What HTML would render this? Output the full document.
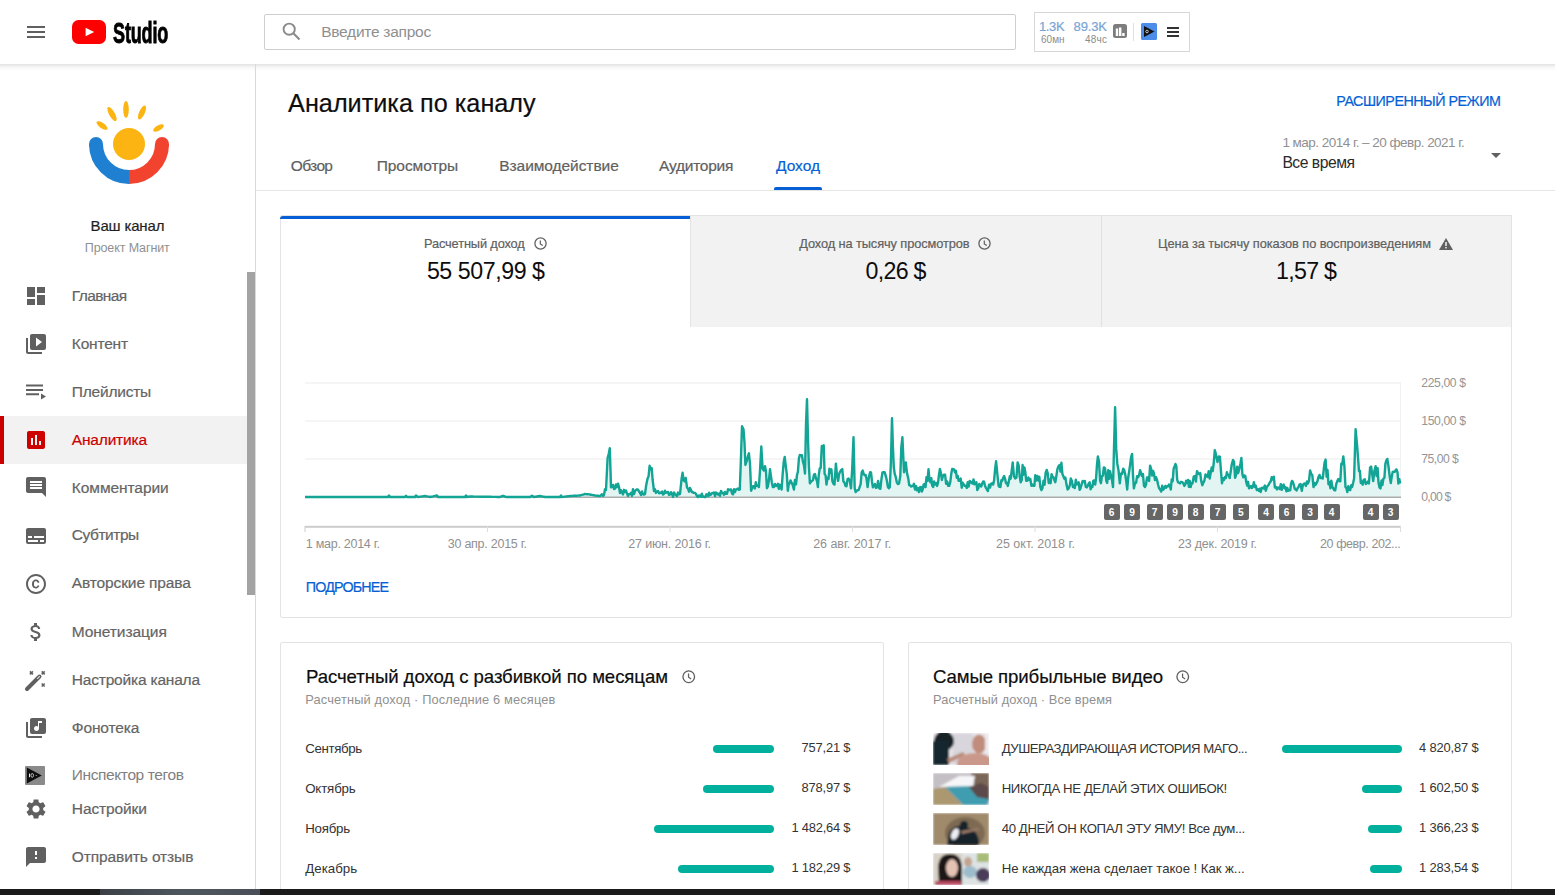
<!DOCTYPE html>
<html><head><meta charset="utf-8"><style>
*{margin:0;padding:0;box-sizing:border-box}
html,body{width:1555px;height:895px;overflow:hidden;background:#fff;font-family:"Liberation Sans",sans-serif}
.t{position:absolute;white-space:pre}
.ic{position:absolute;overflow:visible}
.box{position:absolute}
.mk{position:absolute;top:504px;width:16px;height:16px;background:#666;border-radius:2px;color:#fff;font-size:10.2px;line-height:17px;text-align:center;font-weight:700;font-family:"Liberation Sans",sans-serif}
.bar{position:absolute;height:8px;border-radius:4px;background:#00b09d}
.th{position:absolute;left:933px;width:56px;height:32px;overflow:hidden}
</style></head><body>
<!-- header -->
<div class="box" style="left:0;top:64px;width:1555px;height:7px;background:linear-gradient(rgba(0,0,0,.11),rgba(0,0,0,.03) 50%,rgba(0,0,0,0))"></div>
<div class="box" style="left:264px;top:14px;width:752px;height:36px;border:1px solid #cfcfcf;border-radius:2px"></div>
<div class="box" style="left:1034px;top:12px;width:156px;height:40px;border:1px solid #d8d8d8"></div>
<!-- sidebar -->
<div class="box" style="left:255px;top:64px;width:1px;height:831px;background:#d9d9d9"></div>
<div class="box" style="left:0;top:416px;width:247px;height:48px;background:#f2f2f2"></div>
<div class="box" style="left:0;top:416px;width:4px;height:48px;background:#cc0000"></div>
<div class="box" style="left:247px;top:272px;width:8px;height:323px;background:#a3a3a3"></div>
<!-- tabs border -->
<div class="box" style="left:256px;top:190px;width:1299px;height:1px;background:#e5e5e5"></div>
<div class="box" style="left:774px;top:187px;width:48px;height:3px;background:#065fd4;border-radius:2px 2px 0 0"></div>
<!-- metric card -->
<div class="box" style="left:280px;top:215px;width:1232px;height:403px;border:1px solid #e3e3e3;border-radius:2px"></div>
<div class="box" style="left:690px;top:215px;width:822px;height:112px;background:#f2f2f2;border:1px solid #e3e3e3;border-bottom:none"></div>
<div class="box" style="left:1101px;top:215px;width:1px;height:112px;background:#e0e0e0"></div>
<div class="box" style="left:280px;top:216px;width:410px;height:3px;background:#065fd4;border-radius:3px 0 0 0"></div>
<!-- chart -->
<svg class="ic" style="left:0;top:0;width:1555px;height:895px" viewBox="0 0 1555 895">
<rect x="305" y="382.5" width="1096" height="1" fill="#ececec"/>
<rect x="305" y="420.5" width="1096" height="1" fill="#ececec"/>
<rect x="305" y="458.5" width="1096" height="1" fill="#ececec"/>
<rect x="1400" y="382" width="1" height="115" fill="#f2f2f2"/>
<path d="M305.0,497.0 L305.9,497.0 L306.9,497.0 L307.8,497.0 L308.7,497.0 L309.6,497.0 L310.6,497.0 L311.5,497.0 L312.4,497.0 L313.3,497.0 L314.3,497.0 L315.2,497.0 L316.1,497.0 L317.0,497.0 L318.0,497.0 L318.9,497.0 L319.8,497.0 L320.7,497.0 L321.7,497.0 L322.6,497.0 L323.5,497.0 L324.4,497.0 L325.4,497.0 L326.3,497.0 L327.2,497.0 L328.1,497.0 L329.1,497.0 L330.0,497.0 L330.9,497.0 L331.8,497.0 L332.7,497.0 L333.6,497.0 L334.5,497.0 L335.5,497.0 L336.4,497.0 L337.3,497.0 L338.2,497.0 L339.1,497.0 L340.0,497.0 L340.9,497.0 L341.8,497.0 L342.7,497.0 L343.6,497.0 L344.5,497.0 L345.5,497.0 L346.4,497.0 L347.3,497.0 L348.2,497.0 L349.1,497.0 L350.0,497.0 L350.9,497.0 L351.8,497.0 L352.7,497.0 L353.6,497.0 L354.5,497.0 L355.5,497.0 L356.4,497.0 L357.3,497.0 L358.2,497.0 L359.1,497.0 L360.0,497.0 L360.9,497.0 L361.8,497.0 L362.7,497.0 L363.6,497.0 L364.5,497.0 L365.4,497.0 L366.3,497.0 L367.2,497.0 L368.1,497.0 L369.0,497.0 L369.9,497.0 L370.8,497.0 L371.7,497.0 L372.6,497.0 L373.5,497.0 L374.5,497.0 L375.4,497.0 L376.3,497.0 L377.2,497.0 L378.1,497.0 L379.0,497.0 L379.9,497.0 L380.8,497.0 L381.7,497.0 L382.6,497.0 L383.5,497.0 L384.4,497.0 L385.3,497.0 L386.2,497.0 L387.1,497.0 L388.0,497.0 L389.0,495.5 L390.0,497.0 L390.9,497.0 L391.9,497.0 L392.8,497.0 L393.8,497.0 L394.7,497.0 L395.6,497.0 L396.6,497.0 L397.5,497.0 L398.4,497.0 L399.4,497.0 L400.3,497.0 L401.2,497.0 L402.2,497.0 L403.1,497.0 L404.1,497.0 L405.0,497.0 L406.0,495.8 L407.0,497.0 L408.0,497.0 L409.0,497.0 L410.0,497.0 L411.0,497.0 L412.0,497.0 L413.0,497.0 L414.0,497.0 L415.0,497.0 L416.0,495.5 L417.0,496.2 L418.0,497.0 L419.0,496.9 L420.0,496.7 L421.0,496.6 L422.0,496.4 L423.0,496.3 L424.0,496.1 L425.0,496.0 L426.0,496.2 L427.0,496.4 L428.0,496.6 L429.0,496.8 L430.0,497.0 L431.0,496.8 L432.0,496.6 L433.0,496.4 L434.0,496.1 L435.0,495.9 L436.0,495.7 L437.0,495.5 L438.0,497.0 L438.9,497.0 L439.8,497.0 L440.7,497.0 L441.6,497.0 L442.5,497.0 L443.4,497.0 L444.3,497.0 L445.2,497.0 L446.1,497.0 L447.0,497.0 L447.9,497.0 L448.8,497.0 L449.7,497.0 L450.6,497.0 L451.5,497.0 L452.4,497.0 L453.3,497.0 L454.2,497.0 L455.1,497.0 L456.0,497.0 L456.9,497.0 L457.8,497.0 L458.7,497.0 L459.6,497.0 L460.5,497.0 L461.4,497.0 L462.3,497.0 L463.2,497.0 L464.1,497.0 L465.0,497.0 L466.0,495.5 L467.0,497.0 L468.0,496.8 L469.0,496.7 L470.0,496.5 L470.9,496.5 L471.8,496.5 L472.7,496.5 L473.6,496.6 L474.5,496.6 L475.5,496.6 L476.4,496.6 L477.3,496.6 L478.2,496.6 L479.1,496.7 L480.0,496.7 L480.9,496.7 L481.8,496.7 L482.7,496.7 L483.6,496.7 L484.5,496.7 L485.5,496.8 L486.4,496.8 L487.3,496.8 L488.2,496.8 L489.1,496.8 L490.0,496.8 L490.9,496.8 L491.8,496.9 L492.7,496.9 L493.6,496.9 L494.5,496.9 L495.5,496.9 L496.4,496.9 L497.3,497.0 L498.2,497.0 L499.1,497.0 L500.0,497.0 L501.0,496.6 L502.0,496.2 L503.0,495.8 L504.0,496.2 L505.0,496.6 L506.0,497.0 L506.9,497.0 L507.8,497.0 L508.8,497.0 L509.7,497.0 L510.6,497.0 L511.5,497.0 L512.5,497.0 L513.4,497.0 L514.3,497.0 L515.2,497.0 L516.2,497.0 L517.1,497.0 L518.0,497.0 L518.9,497.0 L519.8,497.0 L520.8,497.0 L521.7,497.0 L522.6,497.0 L523.5,497.0 L524.5,497.0 L525.4,497.0 L526.3,497.0 L527.2,497.0 L528.2,497.0 L529.1,497.0 L530.0,497.0 L531.0,496.4 L532.0,495.7 L533.0,496.4 L534.0,497.0 L535.0,496.8 L536.0,496.7 L537.0,496.5 L538.0,496.3 L539.0,496.2 L540.0,496.0 L541.0,496.2 L542.0,496.4 L543.0,496.6 L544.0,496.8 L545.0,497.0 L545.9,497.0 L546.9,497.0 L547.8,497.0 L548.8,497.0 L549.7,497.0 L550.6,497.0 L551.6,497.0 L552.5,497.0 L553.4,497.0 L554.4,497.0 L555.3,497.0 L556.2,497.0 L557.2,497.0 L558.1,497.0 L559.1,497.0 L560.0,497.0 L561.0,495.5 L562.0,497.0 L563.0,496.9 L564.0,496.8 L565.0,496.6 L566.0,496.5 L567.0,496.4 L568.0,496.2 L569.0,496.1 L570.0,496.0 L570.9,496.0 L571.8,495.9 L572.7,495.9 L573.6,495.8 L574.5,495.8 L575.5,495.7 L576.4,495.7 L577.3,495.6 L578.2,495.6 L579.1,495.5 L580.0,495.5 L581.0,495.2 L582.0,494.9 L583.0,494.6 L584.0,494.3 L585.0,494.0 L586.0,494.1 L587.0,494.2 L588.0,494.3 L589.0,494.4 L590.0,494.5 L591.0,494.7 L592.0,494.9 L593.0,495.1 L594.0,495.3 L595.0,495.5 L596.0,495.6 L597.0,495.7 L598.0,495.8 L599.0,495.9 L600.0,496.0 L601.0,495.1 L602.0,494.3 L603.0,496.0 L604.0,494.9 L605.0,489.2 L606.0,490.0 L607.6,458.0 L608.7,454.0 L609.8,448.2 L611.0,487.4 L612.0,486.8 L613.0,484.9 L614.0,489.0 L615.0,488.7 L616.0,484.4 L617.0,487.2 L618.0,483.7 L619.0,487.0 L620.0,493.0 L621.0,490.2 L622.0,492.1 L623.0,494.5 L624.0,489.8 L625.0,492.0 L626.0,490.6 L627.0,493.6 L628.0,495.9 L629.0,494.1 L630.0,494.0 L631.0,492.8 L632.0,495.8 L633.0,489.2 L634.0,494.0 L635.0,491.0 L636.0,490.0 L637.0,489.4 L638.0,489.7 L639.0,491.4 L640.0,493.0 L641.0,495.1 L642.0,491.5 L643.0,494.1 L644.0,494.6 L645.0,494.0 L646.2,485.2 L647.5,478.7 L648.6,476.2 L649.6,465.8 L650.7,469.3 L651.7,468.1 L652.6,479.5 L654.0,491.0 L655.0,489.3 L656.0,492.9 L657.0,491.5 L658.0,491.1 L659.0,493.2 L660.0,493.0 L661.0,492.6 L662.0,491.5 L663.0,494.5 L664.0,493.8 L665.0,490.7 L666.0,492.7 L667.0,492.3 L668.0,492.0 L669.0,494.9 L670.0,494.4 L671.0,492.2 L672.0,494.0 L673.0,496.9 L674.0,492.4 L675.0,494.3 L676.0,495.0 L677.0,496.1 L678.0,492.6 L679.0,494.2 L680.0,494.0 L681.6,478.7 L682.6,472.8 L683.7,480.5 L684.7,481.5 L685.7,478.0 L687.0,487.4 L688.0,488.7 L689.0,491.7 L690.0,487.9 L691.0,490.0 L692.0,492.2 L693.0,492.2 L694.0,492.9 L695.0,492.9 L696.0,494.0 L697.0,496.4 L698.0,497.0 L699.0,495.4 L700.0,496.0 L700.9,496.7 L701.8,493.7 L702.7,496.7 L703.6,496.4 L704.5,497.0 L705.5,497.0 L706.4,494.3 L707.3,494.7 L708.2,496.1 L709.1,492.6 L710.0,495.0 L711.0,494.7 L712.0,493.1 L713.0,492.8 L714.0,492.4 L715.0,496.1 L716.0,492.6 L717.0,493.2 L718.0,494.5 L719.0,493.5 L720.0,495.9 L721.0,490.9 L722.0,492.8 L723.0,493.0 L724.0,494.8 L725.0,492.0 L726.0,493.8 L727.0,493.7 L728.0,489.2 L729.0,489.8 L730.0,490.0 L731.0,489.4 L732.0,493.5 L733.0,494.4 L734.0,489.2 L735.0,492.0 L736.0,489.3 L736.9,489.1 L737.9,488.6 L738.8,489.9 L739.8,489.5 L740.9,459.8 L742.0,426.3 L743.5,429.3 L744.5,442.8 L745.4,465.0 L746.6,461.3 L747.7,457.4 L748.9,453.3 L750.0,463.7 L751.1,490.8 L752.0,488.4 L753.0,486.2 L753.9,486.3 L754.9,488.5 L755.8,482.2 L756.8,485.8 L757.9,485.6 L758.9,487.1 L760.1,468.9 L761.3,446.5 L762.6,468.6 L763.8,470.5 L765.0,466.2 L766.0,471.4 L766.9,488.3 L767.9,486.4 L769.0,479.5 L770.0,469.3 L771.8,482.2 L772.8,487.1 L773.9,487.1 L775.0,484.0 L776.0,486.0 L776.9,485.7 L777.9,483.7 L778.8,488.9 L779.7,484.7 L780.7,485.5 L781.6,489.5 L782.6,475.0 L783.7,462.0 L784.7,457.0 L785.7,465.5 L786.8,474.1 L787.8,490.8 L788.7,484.6 L789.6,483.4 L790.5,480.4 L791.4,482.2 L792.6,484.6 L793.9,489.5 L794.9,480.0 L796.0,484.3 L797.0,475.0 L797.9,471.9 L798.9,458.6 L799.8,455.0 L800.7,455.1 L801.9,455.3 L803.0,462.0 L804.0,465.5 L805.0,473.6 L806.0,424.7 L807.0,399.2 L808.0,439.5 L808.9,466.5 L809.9,483.4 L810.9,481.9 L812.0,480.9 L813.0,480.0 L814.0,474.5 L815.0,474.1 L816.0,478.5 L817.0,481.1 L817.9,487.1 L818.8,474.8 L819.7,468.6 L820.7,467.9 L821.8,446.0 L822.8,446.5 L823.7,445.3 L824.6,473.8 L825.6,475.5 L826.5,484.6 L827.5,477.6 L828.5,479.0 L829.4,468.8 L830.4,472.8 L831.4,469.3 L832.4,481.3 L833.5,483.9 L834.5,484.6 L835.9,463.7 L837.0,475.3 L838.1,480.9 L839.1,474.1 L840.2,471.6 L841.2,469.9 L842.3,469.1 L843.4,481.4 L844.4,482.3 L845.5,485.9 L846.5,486.3 L847.6,479.0 L848.6,478.5 L849.8,480.5 L851.0,488.3 L852.2,468.9 L853.5,437.3 L854.7,488.3 L855.7,492.1 L856.7,490.8 L857.6,490.2 L858.6,490.1 L859.6,487.1 L860.6,484.3 L861.7,472.3 L862.7,470.5 L863.7,474.1 L864.7,475.2 L865.6,475.0 L866.6,479.0 L867.6,487.1 L868.9,477.1 L870.1,472.3 L871.0,472.4 L872.0,481.5 L872.9,487.4 L873.8,485.9 L874.9,484.1 L876.0,487.9 L877.0,487.5 L878.1,480.9 L879.3,488.3 L880.4,488.8 L881.5,478.7 L882.5,472.5 L883.6,472.3 L884.7,472.3 L885.8,476.1 L886.8,480.3 L887.9,487.1 L888.8,488.2 L889.8,487.1 L890.9,462.3 L892.0,418.3 L892.9,446.5 L893.8,467.1 L894.7,473.6 L895.7,476.8 L896.8,482.3 L897.8,484.0 L899.0,483.6 L900.3,476.0 L901.3,447.5 L902.4,437.3 L904.0,472.3 L905.8,462.5 L907.0,473.1 L908.3,478.5 L909.2,485.2 L910.1,485.3 L911.1,486.6 L912.0,485.9 L913.0,486.1 L914.0,483.8 L915.0,489.6 L916.1,486.1 L917.1,490.4 L918.1,488.3 L919.0,492.1 L920.0,487.1 L920.9,487.0 L921.8,491.5 L922.7,489.5 L923.6,484.6 L924.6,484.0 L925.5,487.1 L926.5,477.2 L927.5,480.9 L928.5,469.3 L929.5,480.0 L930.4,482.2 L931.3,478.1 L932.2,485.5 L933.2,487.0 L934.1,481.5 L935.1,484.6 L936.1,482.9 L937.1,485.9 L938.0,483.0 L939.0,474.6 L939.9,469.0 L940.8,472.3 L941.9,480.0 L943.0,475.8 L944.0,474.6 L945.1,474.8 L946.1,483.9 L947.2,481.5 L948.2,485.9 L949.2,485.9 L950.3,481.9 L951.3,473.6 L952.2,469.0 L953.1,469.2 L954.1,469.5 L955.0,472.3 L955.9,470.7 L956.8,477.8 L957.7,475.8 L958.6,480.9 L959.6,480.8 L960.7,478.6 L961.7,487.7 L962.7,482.8 L963.8,484.7 L964.8,485.9 L965.8,485.7 L966.8,488.0 L967.7,482.1 L968.7,486.5 L969.7,480.9 L970.7,481.7 L971.6,482.9 L972.6,483.6 L973.5,479.4 L974.5,484.4 L975.4,482.9 L976.4,482.2 L977.3,490.0 L978.3,488.3 L979.3,484.0 L980.3,485.3 L981.2,486.5 L982.2,483.5 L983.2,481.5 L984.1,481.7 L985.0,485.7 L986.0,488.0 L986.9,489.5 L987.9,491.0 L989.0,484.6 L990.0,487.6 L991.0,483.9 L992.1,483.3 L993.1,484.6 L994.1,480.4 L995.1,469.2 L996.1,461.3 L997.4,474.5 L998.6,485.9 L999.5,486.9 L1000.4,487.0 L1001.4,480.3 L1002.3,480.7 L1003.2,477.7 L1004.1,476.0 L1005.0,478.6 L1006.0,483.2 L1006.9,482.9 L1007.8,485.9 L1008.8,481.6 L1009.8,476.2 L1010.7,478.7 L1011.7,470.7 L1012.7,462.5 L1014.0,476.5 L1015.2,478.5 L1016.4,477.6 L1017.6,462.5 L1018.6,465.1 L1019.7,476.5 L1020.7,482.2 L1021.7,480.1 L1022.6,465.0 L1023.5,474.7 L1024.4,467.5 L1025.3,471.9 L1026.2,480.9 L1027.2,480.9 L1028.3,477.5 L1029.3,480.0 L1030.3,478.9 L1031.4,485.7 L1032.4,484.6 L1033.4,485.9 L1034.4,485.7 L1035.3,475.2 L1036.3,480.5 L1037.3,476.0 L1038.3,480.5 L1039.3,476.8 L1040.4,487.4 L1041.4,490.2 L1042.4,488.3 L1043.5,480.8 L1044.6,484.7 L1045.6,473.0 L1046.7,469.9 L1047.7,473.0 L1048.7,483.0 L1049.7,479.7 L1050.6,483.2 L1051.6,474.2 L1052.5,476.9 L1053.4,477.2 L1054.3,479.9 L1055.3,482.2 L1056.4,475.8 L1057.4,469.1 L1058.5,466.3 L1059.6,465.0 L1060.5,471.6 L1061.4,462.8 L1062.4,474.1 L1063.3,476.0 L1064.4,478.7 L1065.4,477.6 L1066.5,484.6 L1067.6,489.5 L1068.7,488.4 L1069.8,485.3 L1070.8,478.5 L1071.9,480.9 L1072.9,487.1 L1073.9,485.5 L1074.8,488.1 L1075.8,479.8 L1076.8,484.6 L1077.7,483.3 L1078.7,482.3 L1079.6,489.8 L1080.5,488.3 L1081.6,484.4 L1082.7,480.9 L1083.7,481.9 L1084.8,480.9 L1085.8,487.0 L1086.8,487.4 L1087.8,485.9 L1088.7,483.5 L1089.7,482.3 L1090.6,489.4 L1091.5,485.9 L1092.4,487.0 L1093.3,480.9 L1094.3,480.4 L1095.2,484.6 L1096.1,477.8 L1097.0,464.4 L1097.9,456.4 L1099.0,461.4 L1100.1,480.9 L1101.0,483.2 L1101.9,476.1 L1102.9,475.6 L1103.8,467.4 L1105.0,468.1 L1106.3,480.9 L1107.2,482.9 L1108.2,470.1 L1109.1,478.9 L1110.0,471.1 L1111.0,475.8 L1112.0,480.0 L1113.0,487.1 L1114.0,448.5 L1115.1,407.2 L1116.2,448.9 L1117.3,463.7 L1118.5,470.1 L1119.8,483.4 L1120.9,473.8 L1122.1,473.9 L1123.2,468.6 L1124.2,470.0 L1125.2,474.2 L1126.2,480.9 L1127.2,489.5 L1128.2,477.5 L1129.2,471.1 L1130.1,464.9 L1131.1,457.1 L1132.1,453.9 L1133.0,475.2 L1133.9,488.3 L1135.0,483.5 L1136.1,482.8 L1137.1,476.1 L1138.2,477.2 L1139.1,474.9 L1140.1,470.2 L1141.0,472.9 L1141.9,476.0 L1142.9,473.9 L1144.0,485.8 L1145.0,487.1 L1146.0,484.5 L1147.0,477.4 L1148.0,477.5 L1149.1,480.9 L1150.1,465.6 L1151.1,468.6 L1152.1,475.5 L1153.1,471.0 L1154.0,473.7 L1155.0,480.1 L1156.0,477.2 L1157.0,479.7 L1158.1,484.7 L1159.1,488.3 L1160.1,489.5 L1161.2,491.6 L1162.2,485.7 L1163.2,489.7 L1164.3,488.2 L1165.3,485.9 L1166.2,487.7 L1167.1,486.3 L1168.0,486.4 L1169.0,484.6 L1169.9,486.0 L1170.8,489.5 L1171.7,479.4 L1172.7,481.2 L1173.6,468.8 L1174.5,466.8 L1175.4,464.0 L1176.3,466.0 L1177.2,479.9 L1178.2,482.6 L1179.1,482.6 L1180.0,483.4 L1181.1,481.8 L1182.2,482.1 L1183.2,483.3 L1184.3,485.9 L1185.2,484.7 L1186.1,480.8 L1187.0,482.8 L1188.0,480.0 L1188.9,486.9 L1189.8,480.9 L1190.7,487.0 L1191.6,483.1 L1192.5,483.4 L1193.7,476.6 L1194.9,476.0 L1195.9,481.6 L1197.0,471.2 L1198.0,473.0 L1199.1,474.1 L1200.2,473.0 L1201.2,480.9 L1202.3,485.2 L1203.4,482.6 L1204.4,480.6 L1205.5,474.5 L1206.6,476.0 L1207.6,476.9 L1208.7,471.3 L1209.7,478.5 L1210.7,472.8 L1211.7,467.5 L1212.7,471.1 L1213.7,463.5 L1214.8,450.1 L1215.8,453.9 L1217.5,462.0 L1218.9,456.4 L1219.9,456.7 L1221.0,471.6 L1222.0,483.4 L1223.0,478.1 L1224.0,480.0 L1224.9,477.1 L1225.9,478.1 L1226.9,472.3 L1227.8,474.7 L1228.8,475.6 L1229.7,478.1 L1230.6,472.3 L1231.8,464.2 L1233.0,460.0 L1234.0,461.7 L1235.1,477.8 L1236.1,474.8 L1237.2,466.6 L1238.2,473.0 L1239.3,469.0 L1240.4,463.7 L1241.4,458.0 L1242.4,474.3 L1243.3,477.3 L1244.3,475.4 L1245.3,476.0 L1246.2,481.9 L1247.2,485.6 L1248.1,481.8 L1249.0,488.3 L1250.0,487.3 L1251.0,485.9 L1251.9,487.9 L1252.9,486.6 L1253.9,482.2 L1254.9,487.0 L1255.8,485.8 L1256.8,490.0 L1257.8,489.3 L1258.8,490.7 L1259.7,488.7 L1260.7,492.0 L1261.7,487.9 L1262.7,487.7 L1263.8,488.5 L1264.8,485.6 L1265.8,490.7 L1266.8,487.1 L1267.8,485.7 L1268.8,484.5 L1269.7,482.6 L1270.7,481.4 L1271.7,477.2 L1272.8,479.5 L1273.8,476.7 L1274.9,487.6 L1276.0,487.1 L1277.0,489.4 L1277.9,487.4 L1278.9,487.8 L1279.8,489.0 L1280.8,484.1 L1281.7,489.9 L1282.7,486.0 L1283.6,484.6 L1284.6,488.3 L1285.5,487.1 L1286.4,491.3 L1287.4,488.0 L1288.3,490.8 L1289.2,490.3 L1290.2,490.3 L1291.1,483.3 L1292.0,480.9 L1292.9,481.8 L1293.8,485.0 L1294.8,488.9 L1295.7,489.5 L1296.6,490.5 L1297.6,488.1 L1298.5,487.2 L1299.4,484.6 L1300.6,484.1 L1301.8,490.8 L1302.8,485.4 L1303.9,483.6 L1304.9,483.4 L1305.9,485.9 L1307.0,481.4 L1308.0,483.4 L1309.0,480.9 L1310.1,470.4 L1311.1,473.6 L1312.3,475.2 L1313.5,487.1 L1314.5,482.9 L1315.5,485.0 L1316.4,483.4 L1317.4,481.4 L1318.4,477.3 L1319.5,474.9 L1320.6,478.1 L1321.6,477.8 L1322.7,478.5 L1323.7,470.0 L1324.6,462.5 L1325.6,459.6 L1326.6,476.7 L1327.5,470.0 L1328.5,484.3 L1329.5,482.2 L1330.4,488.2 L1331.3,480.7 L1332.3,486.5 L1333.2,488.4 L1334.2,490.0 L1335.2,490.3 L1336.2,484.2 L1337.3,481.1 L1338.3,479.1 L1339.3,481.0 L1340.3,481.2 L1341.3,463.8 L1342.3,464.1 L1343.3,456.4 L1344.4,466.2 L1345.5,487.1 L1346.4,487.9 L1347.3,492.1 L1348.3,486.1 L1349.2,489.6 L1350.2,490.1 L1351.2,485.2 L1352.1,487.0 L1353.1,483.1 L1354.1,478.5 L1355.6,429.3 L1357.2,446.6 L1359.0,471.2 L1359.9,470.7 L1360.8,483.0 L1361.8,481.2 L1362.7,484.7 L1363.7,479.8 L1364.8,479.3 L1365.8,484.0 L1366.8,483.3 L1367.9,481.6 L1368.9,483.4 L1370.1,467.5 L1371.1,466.5 L1372.2,474.4 L1373.2,481.0 L1374.4,470.9 L1375.6,466.2 L1376.6,476.1 L1377.6,468.1 L1378.5,482.6 L1379.5,487.4 L1380.5,488.4 L1381.5,480.4 L1382.4,485.0 L1383.4,478.7 L1384.4,477.8 L1385.4,463.7 L1386.3,460.6 L1387.3,458.9 L1388.5,466.3 L1389.8,477.3 L1390.8,483.0 L1391.8,476.4 L1392.7,472.0 L1393.7,471.8 L1394.7,471.8 L1395.6,470.4 L1396.5,469.4 L1397.5,472.4 L1398.4,483.6 L1399.3,479.1 L1400.2,483.4 L1400.2,497 L305,497 Z" fill="#e3f5f3"/>
<rect x="305" y="496.6" width="1096" height="1.2" fill="#9a9a9a"/>
<path d="M305.0,497.0 L305.9,497.0 L306.9,497.0 L307.8,497.0 L308.7,497.0 L309.6,497.0 L310.6,497.0 L311.5,497.0 L312.4,497.0 L313.3,497.0 L314.3,497.0 L315.2,497.0 L316.1,497.0 L317.0,497.0 L318.0,497.0 L318.9,497.0 L319.8,497.0 L320.7,497.0 L321.7,497.0 L322.6,497.0 L323.5,497.0 L324.4,497.0 L325.4,497.0 L326.3,497.0 L327.2,497.0 L328.1,497.0 L329.1,497.0 L330.0,497.0 L330.9,497.0 L331.8,497.0 L332.7,497.0 L333.6,497.0 L334.5,497.0 L335.5,497.0 L336.4,497.0 L337.3,497.0 L338.2,497.0 L339.1,497.0 L340.0,497.0 L340.9,497.0 L341.8,497.0 L342.7,497.0 L343.6,497.0 L344.5,497.0 L345.5,497.0 L346.4,497.0 L347.3,497.0 L348.2,497.0 L349.1,497.0 L350.0,497.0 L350.9,497.0 L351.8,497.0 L352.7,497.0 L353.6,497.0 L354.5,497.0 L355.5,497.0 L356.4,497.0 L357.3,497.0 L358.2,497.0 L359.1,497.0 L360.0,497.0 L360.9,497.0 L361.8,497.0 L362.7,497.0 L363.6,497.0 L364.5,497.0 L365.4,497.0 L366.3,497.0 L367.2,497.0 L368.1,497.0 L369.0,497.0 L369.9,497.0 L370.8,497.0 L371.7,497.0 L372.6,497.0 L373.5,497.0 L374.5,497.0 L375.4,497.0 L376.3,497.0 L377.2,497.0 L378.1,497.0 L379.0,497.0 L379.9,497.0 L380.8,497.0 L381.7,497.0 L382.6,497.0 L383.5,497.0 L384.4,497.0 L385.3,497.0 L386.2,497.0 L387.1,497.0 L388.0,497.0 L389.0,495.5 L390.0,497.0 L390.9,497.0 L391.9,497.0 L392.8,497.0 L393.8,497.0 L394.7,497.0 L395.6,497.0 L396.6,497.0 L397.5,497.0 L398.4,497.0 L399.4,497.0 L400.3,497.0 L401.2,497.0 L402.2,497.0 L403.1,497.0 L404.1,497.0 L405.0,497.0 L406.0,495.8 L407.0,497.0 L408.0,497.0 L409.0,497.0 L410.0,497.0 L411.0,497.0 L412.0,497.0 L413.0,497.0 L414.0,497.0 L415.0,497.0 L416.0,495.5 L417.0,496.2 L418.0,497.0 L419.0,496.9 L420.0,496.7 L421.0,496.6 L422.0,496.4 L423.0,496.3 L424.0,496.1 L425.0,496.0 L426.0,496.2 L427.0,496.4 L428.0,496.6 L429.0,496.8 L430.0,497.0 L431.0,496.8 L432.0,496.6 L433.0,496.4 L434.0,496.1 L435.0,495.9 L436.0,495.7 L437.0,495.5 L438.0,497.0 L438.9,497.0 L439.8,497.0 L440.7,497.0 L441.6,497.0 L442.5,497.0 L443.4,497.0 L444.3,497.0 L445.2,497.0 L446.1,497.0 L447.0,497.0 L447.9,497.0 L448.8,497.0 L449.7,497.0 L450.6,497.0 L451.5,497.0 L452.4,497.0 L453.3,497.0 L454.2,497.0 L455.1,497.0 L456.0,497.0 L456.9,497.0 L457.8,497.0 L458.7,497.0 L459.6,497.0 L460.5,497.0 L461.4,497.0 L462.3,497.0 L463.2,497.0 L464.1,497.0 L465.0,497.0 L466.0,495.5 L467.0,497.0 L468.0,496.8 L469.0,496.7 L470.0,496.5 L470.9,496.5 L471.8,496.5 L472.7,496.5 L473.6,496.6 L474.5,496.6 L475.5,496.6 L476.4,496.6 L477.3,496.6 L478.2,496.6 L479.1,496.7 L480.0,496.7 L480.9,496.7 L481.8,496.7 L482.7,496.7 L483.6,496.7 L484.5,496.7 L485.5,496.8 L486.4,496.8 L487.3,496.8 L488.2,496.8 L489.1,496.8 L490.0,496.8 L490.9,496.8 L491.8,496.9 L492.7,496.9 L493.6,496.9 L494.5,496.9 L495.5,496.9 L496.4,496.9 L497.3,497.0 L498.2,497.0 L499.1,497.0 L500.0,497.0 L501.0,496.6 L502.0,496.2 L503.0,495.8 L504.0,496.2 L505.0,496.6 L506.0,497.0 L506.9,497.0 L507.8,497.0 L508.8,497.0 L509.7,497.0 L510.6,497.0 L511.5,497.0 L512.5,497.0 L513.4,497.0 L514.3,497.0 L515.2,497.0 L516.2,497.0 L517.1,497.0 L518.0,497.0 L518.9,497.0 L519.8,497.0 L520.8,497.0 L521.7,497.0 L522.6,497.0 L523.5,497.0 L524.5,497.0 L525.4,497.0 L526.3,497.0 L527.2,497.0 L528.2,497.0 L529.1,497.0 L530.0,497.0 L531.0,496.4 L532.0,495.7 L533.0,496.4 L534.0,497.0 L535.0,496.8 L536.0,496.7 L537.0,496.5 L538.0,496.3 L539.0,496.2 L540.0,496.0 L541.0,496.2 L542.0,496.4 L543.0,496.6 L544.0,496.8 L545.0,497.0 L545.9,497.0 L546.9,497.0 L547.8,497.0 L548.8,497.0 L549.7,497.0 L550.6,497.0 L551.6,497.0 L552.5,497.0 L553.4,497.0 L554.4,497.0 L555.3,497.0 L556.2,497.0 L557.2,497.0 L558.1,497.0 L559.1,497.0 L560.0,497.0 L561.0,495.5 L562.0,497.0 L563.0,496.9 L564.0,496.8 L565.0,496.6 L566.0,496.5 L567.0,496.4 L568.0,496.2 L569.0,496.1 L570.0,496.0 L570.9,496.0 L571.8,495.9 L572.7,495.9 L573.6,495.8 L574.5,495.8 L575.5,495.7 L576.4,495.7 L577.3,495.6 L578.2,495.6 L579.1,495.5 L580.0,495.5 L581.0,495.2 L582.0,494.9 L583.0,494.6 L584.0,494.3 L585.0,494.0 L586.0,494.1 L587.0,494.2 L588.0,494.3 L589.0,494.4 L590.0,494.5 L591.0,494.7 L592.0,494.9 L593.0,495.1 L594.0,495.3 L595.0,495.5 L596.0,495.6 L597.0,495.7 L598.0,495.8 L599.0,495.9 L600.0,496.0 L601.0,495.1 L602.0,494.3 L603.0,496.0 L604.0,494.9 L605.0,489.2 L606.0,490.0 L607.6,458.0 L608.7,454.0 L609.8,448.2 L611.0,487.4 L612.0,486.8 L613.0,484.9 L614.0,489.0 L615.0,488.7 L616.0,484.4 L617.0,487.2 L618.0,483.7 L619.0,487.0 L620.0,493.0 L621.0,490.2 L622.0,492.1 L623.0,494.5 L624.0,489.8 L625.0,492.0 L626.0,490.6 L627.0,493.6 L628.0,495.9 L629.0,494.1 L630.0,494.0 L631.0,492.8 L632.0,495.8 L633.0,489.2 L634.0,494.0 L635.0,491.0 L636.0,490.0 L637.0,489.4 L638.0,489.7 L639.0,491.4 L640.0,493.0 L641.0,495.1 L642.0,491.5 L643.0,494.1 L644.0,494.6 L645.0,494.0 L646.2,485.2 L647.5,478.7 L648.6,476.2 L649.6,465.8 L650.7,469.3 L651.7,468.1 L652.6,479.5 L654.0,491.0 L655.0,489.3 L656.0,492.9 L657.0,491.5 L658.0,491.1 L659.0,493.2 L660.0,493.0 L661.0,492.6 L662.0,491.5 L663.0,494.5 L664.0,493.8 L665.0,490.7 L666.0,492.7 L667.0,492.3 L668.0,492.0 L669.0,494.9 L670.0,494.4 L671.0,492.2 L672.0,494.0 L673.0,496.9 L674.0,492.4 L675.0,494.3 L676.0,495.0 L677.0,496.1 L678.0,492.6 L679.0,494.2 L680.0,494.0 L681.6,478.7 L682.6,472.8 L683.7,480.5 L684.7,481.5 L685.7,478.0 L687.0,487.4 L688.0,488.7 L689.0,491.7 L690.0,487.9 L691.0,490.0 L692.0,492.2 L693.0,492.2 L694.0,492.9 L695.0,492.9 L696.0,494.0 L697.0,496.4 L698.0,497.0 L699.0,495.4 L700.0,496.0 L700.9,496.7 L701.8,493.7 L702.7,496.7 L703.6,496.4 L704.5,497.0 L705.5,497.0 L706.4,494.3 L707.3,494.7 L708.2,496.1 L709.1,492.6 L710.0,495.0 L711.0,494.7 L712.0,493.1 L713.0,492.8 L714.0,492.4 L715.0,496.1 L716.0,492.6 L717.0,493.2 L718.0,494.5 L719.0,493.5 L720.0,495.9 L721.0,490.9 L722.0,492.8 L723.0,493.0 L724.0,494.8 L725.0,492.0 L726.0,493.8 L727.0,493.7 L728.0,489.2 L729.0,489.8 L730.0,490.0 L731.0,489.4 L732.0,493.5 L733.0,494.4 L734.0,489.2 L735.0,492.0 L736.0,489.3 L736.9,489.1 L737.9,488.6 L738.8,489.9 L739.8,489.5 L740.9,459.8 L742.0,426.3 L743.5,429.3 L744.5,442.8 L745.4,465.0 L746.6,461.3 L747.7,457.4 L748.9,453.3 L750.0,463.7 L751.1,490.8 L752.0,488.4 L753.0,486.2 L753.9,486.3 L754.9,488.5 L755.8,482.2 L756.8,485.8 L757.9,485.6 L758.9,487.1 L760.1,468.9 L761.3,446.5 L762.6,468.6 L763.8,470.5 L765.0,466.2 L766.0,471.4 L766.9,488.3 L767.9,486.4 L769.0,479.5 L770.0,469.3 L771.8,482.2 L772.8,487.1 L773.9,487.1 L775.0,484.0 L776.0,486.0 L776.9,485.7 L777.9,483.7 L778.8,488.9 L779.7,484.7 L780.7,485.5 L781.6,489.5 L782.6,475.0 L783.7,462.0 L784.7,457.0 L785.7,465.5 L786.8,474.1 L787.8,490.8 L788.7,484.6 L789.6,483.4 L790.5,480.4 L791.4,482.2 L792.6,484.6 L793.9,489.5 L794.9,480.0 L796.0,484.3 L797.0,475.0 L797.9,471.9 L798.9,458.6 L799.8,455.0 L800.7,455.1 L801.9,455.3 L803.0,462.0 L804.0,465.5 L805.0,473.6 L806.0,424.7 L807.0,399.2 L808.0,439.5 L808.9,466.5 L809.9,483.4 L810.9,481.9 L812.0,480.9 L813.0,480.0 L814.0,474.5 L815.0,474.1 L816.0,478.5 L817.0,481.1 L817.9,487.1 L818.8,474.8 L819.7,468.6 L820.7,467.9 L821.8,446.0 L822.8,446.5 L823.7,445.3 L824.6,473.8 L825.6,475.5 L826.5,484.6 L827.5,477.6 L828.5,479.0 L829.4,468.8 L830.4,472.8 L831.4,469.3 L832.4,481.3 L833.5,483.9 L834.5,484.6 L835.9,463.7 L837.0,475.3 L838.1,480.9 L839.1,474.1 L840.2,471.6 L841.2,469.9 L842.3,469.1 L843.4,481.4 L844.4,482.3 L845.5,485.9 L846.5,486.3 L847.6,479.0 L848.6,478.5 L849.8,480.5 L851.0,488.3 L852.2,468.9 L853.5,437.3 L854.7,488.3 L855.7,492.1 L856.7,490.8 L857.6,490.2 L858.6,490.1 L859.6,487.1 L860.6,484.3 L861.7,472.3 L862.7,470.5 L863.7,474.1 L864.7,475.2 L865.6,475.0 L866.6,479.0 L867.6,487.1 L868.9,477.1 L870.1,472.3 L871.0,472.4 L872.0,481.5 L872.9,487.4 L873.8,485.9 L874.9,484.1 L876.0,487.9 L877.0,487.5 L878.1,480.9 L879.3,488.3 L880.4,488.8 L881.5,478.7 L882.5,472.5 L883.6,472.3 L884.7,472.3 L885.8,476.1 L886.8,480.3 L887.9,487.1 L888.8,488.2 L889.8,487.1 L890.9,462.3 L892.0,418.3 L892.9,446.5 L893.8,467.1 L894.7,473.6 L895.7,476.8 L896.8,482.3 L897.8,484.0 L899.0,483.6 L900.3,476.0 L901.3,447.5 L902.4,437.3 L904.0,472.3 L905.8,462.5 L907.0,473.1 L908.3,478.5 L909.2,485.2 L910.1,485.3 L911.1,486.6 L912.0,485.9 L913.0,486.1 L914.0,483.8 L915.0,489.6 L916.1,486.1 L917.1,490.4 L918.1,488.3 L919.0,492.1 L920.0,487.1 L920.9,487.0 L921.8,491.5 L922.7,489.5 L923.6,484.6 L924.6,484.0 L925.5,487.1 L926.5,477.2 L927.5,480.9 L928.5,469.3 L929.5,480.0 L930.4,482.2 L931.3,478.1 L932.2,485.5 L933.2,487.0 L934.1,481.5 L935.1,484.6 L936.1,482.9 L937.1,485.9 L938.0,483.0 L939.0,474.6 L939.9,469.0 L940.8,472.3 L941.9,480.0 L943.0,475.8 L944.0,474.6 L945.1,474.8 L946.1,483.9 L947.2,481.5 L948.2,485.9 L949.2,485.9 L950.3,481.9 L951.3,473.6 L952.2,469.0 L953.1,469.2 L954.1,469.5 L955.0,472.3 L955.9,470.7 L956.8,477.8 L957.7,475.8 L958.6,480.9 L959.6,480.8 L960.7,478.6 L961.7,487.7 L962.7,482.8 L963.8,484.7 L964.8,485.9 L965.8,485.7 L966.8,488.0 L967.7,482.1 L968.7,486.5 L969.7,480.9 L970.7,481.7 L971.6,482.9 L972.6,483.6 L973.5,479.4 L974.5,484.4 L975.4,482.9 L976.4,482.2 L977.3,490.0 L978.3,488.3 L979.3,484.0 L980.3,485.3 L981.2,486.5 L982.2,483.5 L983.2,481.5 L984.1,481.7 L985.0,485.7 L986.0,488.0 L986.9,489.5 L987.9,491.0 L989.0,484.6 L990.0,487.6 L991.0,483.9 L992.1,483.3 L993.1,484.6 L994.1,480.4 L995.1,469.2 L996.1,461.3 L997.4,474.5 L998.6,485.9 L999.5,486.9 L1000.4,487.0 L1001.4,480.3 L1002.3,480.7 L1003.2,477.7 L1004.1,476.0 L1005.0,478.6 L1006.0,483.2 L1006.9,482.9 L1007.8,485.9 L1008.8,481.6 L1009.8,476.2 L1010.7,478.7 L1011.7,470.7 L1012.7,462.5 L1014.0,476.5 L1015.2,478.5 L1016.4,477.6 L1017.6,462.5 L1018.6,465.1 L1019.7,476.5 L1020.7,482.2 L1021.7,480.1 L1022.6,465.0 L1023.5,474.7 L1024.4,467.5 L1025.3,471.9 L1026.2,480.9 L1027.2,480.9 L1028.3,477.5 L1029.3,480.0 L1030.3,478.9 L1031.4,485.7 L1032.4,484.6 L1033.4,485.9 L1034.4,485.7 L1035.3,475.2 L1036.3,480.5 L1037.3,476.0 L1038.3,480.5 L1039.3,476.8 L1040.4,487.4 L1041.4,490.2 L1042.4,488.3 L1043.5,480.8 L1044.6,484.7 L1045.6,473.0 L1046.7,469.9 L1047.7,473.0 L1048.7,483.0 L1049.7,479.7 L1050.6,483.2 L1051.6,474.2 L1052.5,476.9 L1053.4,477.2 L1054.3,479.9 L1055.3,482.2 L1056.4,475.8 L1057.4,469.1 L1058.5,466.3 L1059.6,465.0 L1060.5,471.6 L1061.4,462.8 L1062.4,474.1 L1063.3,476.0 L1064.4,478.7 L1065.4,477.6 L1066.5,484.6 L1067.6,489.5 L1068.7,488.4 L1069.8,485.3 L1070.8,478.5 L1071.9,480.9 L1072.9,487.1 L1073.9,485.5 L1074.8,488.1 L1075.8,479.8 L1076.8,484.6 L1077.7,483.3 L1078.7,482.3 L1079.6,489.8 L1080.5,488.3 L1081.6,484.4 L1082.7,480.9 L1083.7,481.9 L1084.8,480.9 L1085.8,487.0 L1086.8,487.4 L1087.8,485.9 L1088.7,483.5 L1089.7,482.3 L1090.6,489.4 L1091.5,485.9 L1092.4,487.0 L1093.3,480.9 L1094.3,480.4 L1095.2,484.6 L1096.1,477.8 L1097.0,464.4 L1097.9,456.4 L1099.0,461.4 L1100.1,480.9 L1101.0,483.2 L1101.9,476.1 L1102.9,475.6 L1103.8,467.4 L1105.0,468.1 L1106.3,480.9 L1107.2,482.9 L1108.2,470.1 L1109.1,478.9 L1110.0,471.1 L1111.0,475.8 L1112.0,480.0 L1113.0,487.1 L1114.0,448.5 L1115.1,407.2 L1116.2,448.9 L1117.3,463.7 L1118.5,470.1 L1119.8,483.4 L1120.9,473.8 L1122.1,473.9 L1123.2,468.6 L1124.2,470.0 L1125.2,474.2 L1126.2,480.9 L1127.2,489.5 L1128.2,477.5 L1129.2,471.1 L1130.1,464.9 L1131.1,457.1 L1132.1,453.9 L1133.0,475.2 L1133.9,488.3 L1135.0,483.5 L1136.1,482.8 L1137.1,476.1 L1138.2,477.2 L1139.1,474.9 L1140.1,470.2 L1141.0,472.9 L1141.9,476.0 L1142.9,473.9 L1144.0,485.8 L1145.0,487.1 L1146.0,484.5 L1147.0,477.4 L1148.0,477.5 L1149.1,480.9 L1150.1,465.6 L1151.1,468.6 L1152.1,475.5 L1153.1,471.0 L1154.0,473.7 L1155.0,480.1 L1156.0,477.2 L1157.0,479.7 L1158.1,484.7 L1159.1,488.3 L1160.1,489.5 L1161.2,491.6 L1162.2,485.7 L1163.2,489.7 L1164.3,488.2 L1165.3,485.9 L1166.2,487.7 L1167.1,486.3 L1168.0,486.4 L1169.0,484.6 L1169.9,486.0 L1170.8,489.5 L1171.7,479.4 L1172.7,481.2 L1173.6,468.8 L1174.5,466.8 L1175.4,464.0 L1176.3,466.0 L1177.2,479.9 L1178.2,482.6 L1179.1,482.6 L1180.0,483.4 L1181.1,481.8 L1182.2,482.1 L1183.2,483.3 L1184.3,485.9 L1185.2,484.7 L1186.1,480.8 L1187.0,482.8 L1188.0,480.0 L1188.9,486.9 L1189.8,480.9 L1190.7,487.0 L1191.6,483.1 L1192.5,483.4 L1193.7,476.6 L1194.9,476.0 L1195.9,481.6 L1197.0,471.2 L1198.0,473.0 L1199.1,474.1 L1200.2,473.0 L1201.2,480.9 L1202.3,485.2 L1203.4,482.6 L1204.4,480.6 L1205.5,474.5 L1206.6,476.0 L1207.6,476.9 L1208.7,471.3 L1209.7,478.5 L1210.7,472.8 L1211.7,467.5 L1212.7,471.1 L1213.7,463.5 L1214.8,450.1 L1215.8,453.9 L1217.5,462.0 L1218.9,456.4 L1219.9,456.7 L1221.0,471.6 L1222.0,483.4 L1223.0,478.1 L1224.0,480.0 L1224.9,477.1 L1225.9,478.1 L1226.9,472.3 L1227.8,474.7 L1228.8,475.6 L1229.7,478.1 L1230.6,472.3 L1231.8,464.2 L1233.0,460.0 L1234.0,461.7 L1235.1,477.8 L1236.1,474.8 L1237.2,466.6 L1238.2,473.0 L1239.3,469.0 L1240.4,463.7 L1241.4,458.0 L1242.4,474.3 L1243.3,477.3 L1244.3,475.4 L1245.3,476.0 L1246.2,481.9 L1247.2,485.6 L1248.1,481.8 L1249.0,488.3 L1250.0,487.3 L1251.0,485.9 L1251.9,487.9 L1252.9,486.6 L1253.9,482.2 L1254.9,487.0 L1255.8,485.8 L1256.8,490.0 L1257.8,489.3 L1258.8,490.7 L1259.7,488.7 L1260.7,492.0 L1261.7,487.9 L1262.7,487.7 L1263.8,488.5 L1264.8,485.6 L1265.8,490.7 L1266.8,487.1 L1267.8,485.7 L1268.8,484.5 L1269.7,482.6 L1270.7,481.4 L1271.7,477.2 L1272.8,479.5 L1273.8,476.7 L1274.9,487.6 L1276.0,487.1 L1277.0,489.4 L1277.9,487.4 L1278.9,487.8 L1279.8,489.0 L1280.8,484.1 L1281.7,489.9 L1282.7,486.0 L1283.6,484.6 L1284.6,488.3 L1285.5,487.1 L1286.4,491.3 L1287.4,488.0 L1288.3,490.8 L1289.2,490.3 L1290.2,490.3 L1291.1,483.3 L1292.0,480.9 L1292.9,481.8 L1293.8,485.0 L1294.8,488.9 L1295.7,489.5 L1296.6,490.5 L1297.6,488.1 L1298.5,487.2 L1299.4,484.6 L1300.6,484.1 L1301.8,490.8 L1302.8,485.4 L1303.9,483.6 L1304.9,483.4 L1305.9,485.9 L1307.0,481.4 L1308.0,483.4 L1309.0,480.9 L1310.1,470.4 L1311.1,473.6 L1312.3,475.2 L1313.5,487.1 L1314.5,482.9 L1315.5,485.0 L1316.4,483.4 L1317.4,481.4 L1318.4,477.3 L1319.5,474.9 L1320.6,478.1 L1321.6,477.8 L1322.7,478.5 L1323.7,470.0 L1324.6,462.5 L1325.6,459.6 L1326.6,476.7 L1327.5,470.0 L1328.5,484.3 L1329.5,482.2 L1330.4,488.2 L1331.3,480.7 L1332.3,486.5 L1333.2,488.4 L1334.2,490.0 L1335.2,490.3 L1336.2,484.2 L1337.3,481.1 L1338.3,479.1 L1339.3,481.0 L1340.3,481.2 L1341.3,463.8 L1342.3,464.1 L1343.3,456.4 L1344.4,466.2 L1345.5,487.1 L1346.4,487.9 L1347.3,492.1 L1348.3,486.1 L1349.2,489.6 L1350.2,490.1 L1351.2,485.2 L1352.1,487.0 L1353.1,483.1 L1354.1,478.5 L1355.6,429.3 L1357.2,446.6 L1359.0,471.2 L1359.9,470.7 L1360.8,483.0 L1361.8,481.2 L1362.7,484.7 L1363.7,479.8 L1364.8,479.3 L1365.8,484.0 L1366.8,483.3 L1367.9,481.6 L1368.9,483.4 L1370.1,467.5 L1371.1,466.5 L1372.2,474.4 L1373.2,481.0 L1374.4,470.9 L1375.6,466.2 L1376.6,476.1 L1377.6,468.1 L1378.5,482.6 L1379.5,487.4 L1380.5,488.4 L1381.5,480.4 L1382.4,485.0 L1383.4,478.7 L1384.4,477.8 L1385.4,463.7 L1386.3,460.6 L1387.3,458.9 L1388.5,466.3 L1389.8,477.3 L1390.8,483.0 L1391.8,476.4 L1392.7,472.0 L1393.7,471.8 L1394.7,471.8 L1395.6,470.4 L1396.5,469.4 L1397.5,472.4 L1398.4,483.6 L1399.3,479.1 L1400.2,483.4" fill="none" stroke="#12a494" stroke-width="2.4" stroke-linejoin="round"/>
<rect x="305" y="525.8" width="1096" height="2" fill="#cccccc"/>
<rect x="304.5" y="526" width="1" height="6" fill="#cccccc"/>
<rect x="487" y="526" width="1" height="6" fill="#dddddd"/>
<rect x="669.5" y="526" width="1" height="6" fill="#dddddd"/>
<rect x="852" y="526" width="1" height="6" fill="#dddddd"/>
<rect x="1034.5" y="526" width="1" height="6" fill="#dddddd"/>
<rect x="1217" y="526" width="1" height="6" fill="#dddddd"/>
<rect x="1400" y="526" width="1" height="6" fill="#dddddd"/>
</svg>
<div class="mk" style="left:1103.6px">6</div><div class="mk" style="left:1124.0px">9</div><div class="mk" style="left:1146.6px">7</div><div class="mk" style="left:1167.0px">9</div><div class="mk" style="left:1187.7px">8</div><div class="mk" style="left:1209.6px">7</div><div class="mk" style="left:1232.8px">5</div><div class="mk" style="left:1258.0px">4</div><div class="mk" style="left:1278.5px">6</div><div class="mk" style="left:1302.0px">3</div><div class="mk" style="left:1323.6px">4</div><div class="mk" style="left:1362.7px">4</div><div class="mk" style="left:1382.7px">3</div>
<!-- bottom cards -->
<div class="box" style="left:280px;top:642px;width:604px;height:260px;border:1px solid #e3e3e3;border-radius:2px"></div>
<div class="box" style="left:908px;top:642px;width:604px;height:260px;border:1px solid #e3e3e3;border-radius:2px"></div>
<div class="bar" style="left:713px;top:745px;width:61px"></div><div class="bar" style="left:703px;top:785px;width:71px"></div><div class="bar" style="left:654px;top:825px;width:120px"></div><div class="bar" style="left:678px;top:865px;width:96px"></div><div class="bar" style="left:1282px;top:745px;width:120px"></div><div class="bar" style="left:1362px;top:785px;width:40px"></div><div class="bar" style="left:1368px;top:825px;width:34px"></div><div class="bar" style="left:1370px;top:865px;width:32px"></div>
<svg class="th" style="top:733px" viewBox="0 0 56 32" preserveAspectRatio="none"><defs><filter id="b0"><feGaussianBlur stdDeviation="1.2"/></filter></defs><g filter="url(#b0)"><rect width="56" height="32" fill="#e6e3e6"/><rect x="20" y="0" width="20" height="32" fill="#d8d6dc"/><circle cx="11" cy="8" r="10" fill="#142028"/><rect x="0" y="8" width="16" height="24" fill="#18262e"/><path d="M14 26 L30 19 L32 22 L16 30 Z" fill="#b88a78"/><ellipse cx="46" cy="11" rx="7" ry="9.5" fill="#c08c7c"/><ellipse cx="42" cy="30" rx="18" ry="10" fill="#c9988a"/><rect x="52" y="0" width="4" height="20" fill="#eeeaee"/></g></svg><svg class="th" style="top:773px" viewBox="0 0 56 32" preserveAspectRatio="none"><defs><filter id="b1"><feGaussianBlur stdDeviation="1.2"/></filter></defs><g filter="url(#b1)"><rect width="56" height="32" fill="#c4bfc4"/><path d="M38 0 L56 0 L56 28 L44 22 Z" fill="#7a6656"/><path d="M6 14 L26 3 L42 3 L40 13 Z" fill="#f6f6f8"/><path d="M12 14 L40 13 L56 27 L54 32 L30 32 Z" fill="#3f9db0"/><path d="M0 16 L12 14 L30 32 L0 32 Z" fill="#ab9770"/><path d="M36 14 L48 10 L56 14 L56 26 L44 24 Z" fill="#5c4a48"/></g></svg><svg class="th" style="top:813px" viewBox="0 0 56 32" preserveAspectRatio="none"><defs><filter id="b2"><feGaussianBlur stdDeviation="1.2"/></filter></defs><g filter="url(#b2)"><rect width="56" height="32" fill="#a08a6c"/><ellipse cx="32" cy="20" rx="20" ry="16" fill="#7e6a52"/><path d="M14 32 L16 20 Q22 10 32 14 Q44 16 46 28 L46 32 Z" fill="#16202a"/><circle cx="31" cy="12" r="4" fill="#18242a"/><ellipse cx="22" cy="21" rx="3.5" ry="6" fill="#eeeef2" transform="rotate(25 22 21)"/><path d="M28 18 L46 15 L46 17 L29 21 Z" fill="#9c7a66"/></g></svg><svg class="th" style="top:853px" viewBox="0 0 56 32" preserveAspectRatio="none"><defs><filter id="b3"><feGaussianBlur stdDeviation="1.2"/></filter></defs><g filter="url(#b3)"><rect width="56" height="32" fill="#d8d2c6"/><rect x="29" y="0" width="27" height="32" fill="#dde2e2"/><path d="M6 32 L5 14 Q6 1 17 1 Q28 1 29 14 L29 32 Z" fill="#1b1515"/><ellipse cx="19" cy="15" rx="6" ry="9" fill="#e4c2b4"/><rect x="2" y="28" width="26" height="4" fill="#b84a62"/><ellipse cx="35" cy="9" rx="4" ry="5" fill="#c4a490"/><ellipse cx="37" cy="19" rx="7" ry="6" fill="#9cbccc"/><ellipse cx="50" cy="22" rx="7" ry="7" fill="#4a3c5a"/><rect x="44" y="0" width="12" height="9" fill="#a8bc78"/></g></svg>
<div style="position:absolute;left:27px;top:26px;width:18px;height:2px;background:#606060"></div><div style="position:absolute;left:27px;top:31px;width:18px;height:2px;background:#606060"></div><div style="position:absolute;left:27px;top:36px;width:18px;height:2px;background:#606060"></div><svg class="ic" style="left:72px;top:20px;width:34px;height:24px;" viewBox="0 0 34 24" preserveAspectRatio="none"><rect x="0" y="0" width="34" height="24" rx="6.5" ry="6.5" fill="#ff0000"/><path d="M13.6 7.8 L22.2 12 L13.6 16.3 Z" fill="#fff"/></svg><div class="t" style="left:112.5px;top:17.8px;font-size:29.5px;line-height:29.5px;font-weight:700;color:#000;-webkit-text-stroke:0.9px #000;transform:scaleX(0.61);transform-origin:0 0;letter-spacing:-0.2px">Studio</div><svg class="ic" style="left:282px;top:22px;width:19px;height:19px;" viewBox="0 0 19 19" preserveAspectRatio="none"><circle cx="7.2" cy="7.2" r="5.6" fill="none" stroke="#8a8a8a" stroke-width="1.9"/><path d="M11.3 11.3 L17.5 17.5" stroke="#8a8a8a" stroke-width="2"/></svg><svg class="ic" style="left:1113px;top:24px;width:14px;height:14px;" viewBox="0 0 14 14" preserveAspectRatio="none"><rect width="14" height="14" rx="2.5" fill="#7d7d7d"/><rect x="2.8" y="4.5" width="2.4" height="7.5" fill="#fff"/><rect x="6" y="3.5" width="2.4" height="8.5" fill="#fff"/><rect x="9.2" y="9" width="2.4" height="3" fill="#fff"/></svg><div style="position:absolute;left:1133px;top:23px;width:1px;height:18px;background:#e0e0e0"></div><svg class="ic" style="left:1141px;top:23px;width:16px;height:17px;" viewBox="0 0 16 17" preserveAspectRatio="none"><rect width="16" height="17" rx="1.5" fill="#4b8de8"/><path d="M3 3 L13.5 8.5 L3 14 Z" fill="#111"/><circle cx="6" cy="8.5" r="1.3" fill="none" stroke="#fff" stroke-width="0.7"/></svg><div style="position:absolute;left:1167px;top:27px;width:12px;height:2px;background:#333"></div><div style="position:absolute;left:1167px;top:31.2px;width:12px;height:2px;background:#333"></div><div style="position:absolute;left:1167px;top:35.4px;width:12px;height:2px;background:#333"></div><svg class="ic" style="left:84px;top:96px;width:90px;height:94px" viewBox="84 96 90 94">
<path d="M96 144 A33 33 0 0 0 129.5 177" fill="none" stroke="#1f80d2" stroke-width="14" stroke-linecap="butt"/>
<path d="M162 144 A33 33 0 0 1 129 177" fill="none" stroke="#f2432f" stroke-width="14" stroke-linecap="butt"/>
<circle cx="96" cy="144" r="7" fill="#1f80d2"/>
<circle cx="162" cy="144" r="7" fill="#f2432f"/>
<circle cx="129" cy="144" r="16" fill="#fbb412"/>
<ellipse cx="126" cy="109.5" rx="2.8" ry="8.5" fill="#fbb412"/>
<ellipse cx="112" cy="114" rx="2.8" ry="8" fill="#fbb412" transform="rotate(-30 112 114)"/>
<ellipse cx="142" cy="112.5" rx="2.8" ry="7.5" fill="#fbb412" transform="rotate(25 142 112.5)"/>
<ellipse cx="102" cy="125.5" rx="2.6" ry="6.5" fill="#fbb412" transform="rotate(-55 102 125.5)"/>
<ellipse cx="158.5" cy="128" rx="2.6" ry="6" fill="#fbb412" transform="rotate(60 158.5 128)"/>
</svg><svg class="ic" style="left:24px;top:284px;width:24px;height:24px;" viewBox="0 0 24 24" preserveAspectRatio="none"><path d="M3 13h8V3H3v10zm0 8h8v-6H3v6zm10 0h8V11h-8v10zm0-18v6h8V3h-8z" fill="#606060"/></svg><svg class="ic" style="left:24px;top:332px;width:24px;height:24px;" viewBox="0 0 24 24" preserveAspectRatio="none"><path d="M4 6H2v14c0 1.1.9 2 2 2h14v-2H4V6zm16-4H8c-1.1 0-2 .9-2 2v12c0 1.1.9 2 2 2h12c1.1 0 2-.9 2-2V4c0-1.1-.9-2-2-2zm-8 12.5v-9l6 4.5-6 4.5z" fill="#606060"/></svg><svg class="ic" style="left:24px;top:379px;width:24px;height:24px;" viewBox="0 0 24 24" preserveAspectRatio="none"><path d="M2 5.5h17v2H2v-2zm0 4.4h17v2H2v-2zm0 4.4h13v2H2v-2zm15 .2v6l5-3-5-3z" fill="#606060"/></svg><svg class="ic" style="left:27px;top:431px;width:18px;height:18px;" viewBox="3 3 18 18" preserveAspectRatio="none"><path d="M19 3H5c-1.1 0-2 .9-2 2v14c0 1.1.9 2 2 2h14c1.1 0 2-.9 2-2V5c0-1.1-.9-2-2-2zM9 17H7v-7h2v7zm4 0h-2V7h2v10zm4 0h-2v-4h2v4z" fill="#cc0000"/></svg><svg class="ic" style="left:24px;top:475px;width:24px;height:24px;" viewBox="0 0 24 24" preserveAspectRatio="none"><path d="M21.99 4c0-1.1-.89-2-1.99-2H4c-1.1 0-2 .9-2 2v12c0 1.1.9 2 2 2h14l4 4-.01-18zM18 14H6v-2h12v2zm0-3H6V9h12v2zm0-3H6V6h12v2z" fill="#606060"/></svg><svg class="ic" style="left:24px;top:524px;width:24px;height:24px;" viewBox="0 0 24 24" preserveAspectRatio="none"><path d="M20 4H4c-1.1 0-2 .9-2 2v12c0 1.1.9 2 2 2h16c1.1 0 2-.9 2-2V6c0-1.1-.9-2-2-2zM4 12h4v2H4v-2zm10 6H4v-2h10v2zm6 0h-4v-2h4v2zm0-4H10v-2h10v2z" fill="#606060"/></svg><svg class="ic" style="left:24px;top:572px;width:24px;height:24px;" viewBox="0 0 24 24" preserveAspectRatio="none"><path d="M10.08 10.86c.05-.33.16-.62.3-.87s.34-.46.59-.62c.24-.15.54-.22.91-.23.23.01.44.05.63.13.2.09.38.21.52.36s.25.33.34.53.13.42.14.64h1.79c-.02-.47-.11-.9-.28-1.29s-.4-.73-.7-1.01-.66-.5-1.08-.66-.88-.23-1.39-.23c-.65 0-1.22.11-1.7.34s-.88.53-1.2.92-.56.84-.71 1.36S8 11.29 8 11.87v.27c0 .58.08 1.12.23 1.64s.39.97.71 1.35.72.69 1.2.91 1.05.34 1.7.34c.47 0 .91-.08 1.32-.23s.77-.36 1.08-.63.56-.58.74-.94.29-.74.3-1.150h-1.79c-.01.21-.06.4-.15.58s-.21.33-.36.46-.32.23-.52.3c-.19.07-.39.09-.6.1-.36-.01-.66-.08-.89-.23-.25-.16-.45-.37-.59-.62s-.25-.55-.3-.88-.08-.67-.08-1v-.27c0-.35.03-.68.08-1.01zM12 2C6.48 2 2 6.48 2 12s4.48 10 10 10 10-4.48 10-10S17.52 2 12 2zm0 18c-4.41 0-8-3.59-8-8s3.59-8 8-8 8 3.59 8 8-3.59 8-8 8z" fill="#606060"/></svg><svg class="ic" style="left:24px;top:620px;width:24px;height:24px;" viewBox="0 0 24 24" preserveAspectRatio="none"><path d="M11.8 10.9c-2.27-.59-3-1.2-3-2.15 0-1.09 1.01-1.85 2.7-1.85 1.78 0 2.44.85 2.5 2.1h2.21c-.07-1.72-1.120-3.3-3.21-3.81V3h-3v2.16c-1.94.42-3.5 1.68-3.5 3.61 0 2.31 1.91 3.46 4.7 4.13 2.5.6 3 1.48 3 2.41 0 .69-.49 1.79-2.7 1.790-2.06 0-2.87-.92-2.98-2.1h-2.2c.12 2.19 1.76 3.42 3.68 3.83V21h3v-2.15c1.95-.37 3.5-1.5 3.5-3.55 0-2.84-2.43-3.81-4.7-4.4z" fill="#606060"/></svg><svg class="ic" style="left:24px;top:668px;width:24px;height:24px;" viewBox="0 0 24 24" preserveAspectRatio="none"><path d="M3 21 L15.5 8.5" stroke="#606060" stroke-width="4" stroke-linecap="round"/><path d="M13.2 10.8 L15.8 8.2" stroke="#dcdcdc" stroke-width="1.2"/><path d="M5.9 3.4 l3 3 M8.9 3.4 l-3 3 M17.7 3.4 l3 3 M20.7 3.4 l-3 3 M17.7 15.5 l3 3 M20.7 15.5 l-3 3" stroke="#606060" stroke-width="1.5"/></svg><svg class="ic" style="left:24px;top:716px;width:24px;height:24px;" viewBox="0 0 24 24" preserveAspectRatio="none"><path d="M20 2H8c-1.1 0-2 .9-2 2v12c0 1.1.9 2 2 2h12c1.1 0 2-.9 2-2V4c0-1.1-.9-2-2-2zm-2 5h-3v5.5c0 1.38-1.12 2.5-2.5 2.5S10 13.88 10 12.5s1.12-2.5 2.5-2.5c.57 0 1.08.19 1.5.51V5h4v2zM4 6H2v14c0 1.1.9 2 2 2h14v-2H4V6z" fill="#606060"/></svg><svg class="ic" style="left:25px;top:766px;width:20px;height:19px;" viewBox="0 0 20 19" preserveAspectRatio="none"><rect width="20" height="19" rx="1" fill="#8a8a8a"/><path d="M1.8 1.6 L16.8 9.5 L1.8 17.4 Z" fill="#0e0e0e"/><rect x="4.1" y="7.6" width="0.9" height="3.6" fill="#fff"/><ellipse cx="7.2" cy="9.4" rx="1.3" ry="1.9" fill="none" stroke="#ddd" stroke-width="0.8"/><circle cx="11.2" cy="9.5" r="0.6" fill="#bbb"/></svg><svg class="ic" style="left:24px;top:797px;width:24px;height:24px;" viewBox="0 0 24 24" preserveAspectRatio="none"><path d="M19.14 12.94c.04-.3.06-.61.06-.94 0-.32-.02-.64-.07-.94l2.03-1.58c.18-.14.23-.41.12-.61l-1.92-3.32c-.12-.22-.37-.29-.59-.22l-2.39.96c-.5-.38-1.03-.7-1.62-.94l-.36-2.54c-.04-.24-.24-.41-.48-.41h-3.84c-.24 0-.43.17-.47.41l-.36 2.54c-.59.24-1.13.57-1.620.94l-2.39-.96c-.22-.08-.47 0-.59.22L2.74 8.87c-.12.21-.08.47.12.61l2.03 1.58c-.05.3-.09.63-.09.94s.02.64.07.94l-2.03 1.58c-.18.14-.23.41-.12.61l1.92 3.32c.12.22.37.29.59.22l2.39-.96c.5.38 1.03.7 1.62.94l.36 2.54c.05.24.24.41.48.41h3.84c.24 0 .44-.17.47-.41l.36-2.54c.59-.24 1.13-.56 1.62-.94l2.39.96c.22.08.47 0 .59-.22l1.92-3.32c.12-.22.07-.47-.12-.61l-2.01-1.58zM12 15.6c-1.98 0-3.6-1.62-3.6-3.6s1.62-3.6 3.6-3.6 3.6 1.62 3.6 3.6-1.62 3.6-3.6 3.6z" fill="#606060"/></svg><svg class="ic" style="left:24px;top:845px;width:24px;height:24px;" viewBox="0 0 24 24" preserveAspectRatio="none"><path d="M20 2H4c-1.1 0-1.99.9-1.99 2L2 22l4-4h14c1.1 0 2-.9 2-2V4c0-1.1-.9-2-2-2zm-7 12h-2v-2h2v2zm0-4h-2V6h2v4z" fill="#606060"/></svg><svg class="ic" style="left:1491px;top:153px;width:10px;height:5px;" viewBox="0 0 10 5" preserveAspectRatio="none"><path d="M0 0 L10 0 L5 5 Z" fill="#606060"/></svg><svg class="ic" style="left:533.5px;top:237.2px;width:13px;height:13px;" viewBox="0 0 13 13" preserveAspectRatio="none"><circle cx="6.5" cy="6.5" r="5.6" fill="none" stroke="#606060" stroke-width="1.3"/><path d="M6.3 3.4 V6.9 L8.8 8.6" fill="none" stroke="#606060" stroke-width="1.2"/></svg><svg class="ic" style="left:978.4px;top:237.2px;width:13px;height:13px;" viewBox="0 0 13 13" preserveAspectRatio="none"><circle cx="6.5" cy="6.5" r="5.6" fill="none" stroke="#606060" stroke-width="1.3"/><path d="M6.3 3.4 V6.9 L8.8 8.6" fill="none" stroke="#606060" stroke-width="1.2"/></svg><svg class="ic" style="left:1439px;top:238px;width:14px;height:12px;" viewBox="0 0 14 12" preserveAspectRatio="none"><path d="M7 0 L14 12 L0 12 Z" fill="#606060"/><rect x="6.3" y="4" width="1.4" height="4" fill="#fff"/><rect x="6.3" y="9" width="1.4" height="1.4" fill="#fff"/></svg><svg class="ic" style="left:682.3px;top:670.2px;width:13.5px;height:13.5px;" viewBox="0 0 13 13" preserveAspectRatio="none"><circle cx="6.5" cy="6.5" r="5.6" fill="none" stroke="#606060" stroke-width="1.3"/><path d="M6.3 3.4 V6.9 L8.8 8.6" fill="none" stroke="#606060" stroke-width="1.2"/></svg><svg class="ic" style="left:1176.3px;top:670.2px;width:13.5px;height:13.5px;" viewBox="0 0 13 13" preserveAspectRatio="none"><circle cx="6.5" cy="6.5" r="5.6" fill="none" stroke="#606060" stroke-width="1.3"/><path d="M6.3 3.4 V6.9 L8.8 8.6" fill="none" stroke="#606060" stroke-width="1.2"/></svg>
<div class="t" style="left:321.20px;top:23.83px;font-size:15.5px;line-height:15.5px;color:#8f8f8f;letter-spacing:-0.257px;">Введите запрос</div>
<div class="t" style="left:1039.00px;top:19.95px;font-size:13px;line-height:13px;color:#78a4d6;letter-spacing:-0.383px;-webkit-text-stroke:0.2px #78a4d6;">1.3K</div>
<div class="t" style="left:1041.00px;top:34.50px;font-size:10px;line-height:10px;color:#8c8c8c;letter-spacing:0.023px;">60мн</div>
<div class="t" style="left:1073.60px;top:19.95px;font-size:13px;line-height:13px;color:#78a4d6;letter-spacing:-0.146px;-webkit-text-stroke:0.2px #78a4d6;">89.3K</div>
<div class="t" style="left:1085.00px;top:34.50px;font-size:10px;line-height:10px;color:#8c8c8c;letter-spacing:0.219px;">48чс</div>
<div class="t" style="left:90.60px;top:218.25px;font-size:15px;line-height:15px;color:#1f1f1f;letter-spacing:-0.171px;-webkit-text-stroke:0.2px #1f1f1f;">Ваш канал</div>
<div class="t" style="left:84.80px;top:242.18px;font-size:12.5px;line-height:12.5px;color:#909090;letter-spacing:-0.111px;">Проект Магнит</div>
<div class="t" style="left:71.80px;top:287.82px;font-size:15.5px;line-height:15.5px;color:#646464;letter-spacing:-0.617px;-webkit-text-stroke:0.2px #646464;">Главная</div>
<div class="t" style="left:71.80px;top:335.82px;font-size:15.5px;line-height:15.5px;color:#646464;letter-spacing:-0.187px;-webkit-text-stroke:0.2px #646464;">Контент</div>
<div class="t" style="left:71.80px;top:383.82px;font-size:15.5px;line-height:15.5px;color:#646464;letter-spacing:-0.220px;-webkit-text-stroke:0.2px #646464;">Плейлисты</div>
<div class="t" style="left:71.80px;top:431.82px;font-size:15.5px;line-height:15.5px;color:#cc0000;letter-spacing:-0.179px;-webkit-text-stroke:0.2px #cc0000;">Аналитика</div>
<div class="t" style="left:71.80px;top:479.82px;font-size:15.5px;line-height:15.5px;color:#646464;letter-spacing:-0.072px;-webkit-text-stroke:0.2px #646464;">Комментарии</div>
<div class="t" style="left:71.80px;top:527.33px;font-size:15.5px;line-height:15.5px;color:#646464;letter-spacing:-0.461px;-webkit-text-stroke:0.2px #646464;">Субтитры</div>
<div class="t" style="left:71.80px;top:575.33px;font-size:15.5px;line-height:15.5px;color:#646464;letter-spacing:-0.125px;-webkit-text-stroke:0.2px #646464;">Авторские права</div>
<div class="t" style="left:71.80px;top:623.83px;font-size:15.5px;line-height:15.5px;color:#646464;letter-spacing:-0.080px;-webkit-text-stroke:0.2px #646464;">Монетизация</div>
<div class="t" style="left:71.80px;top:671.83px;font-size:15.5px;line-height:15.5px;color:#646464;letter-spacing:-0.194px;-webkit-text-stroke:0.2px #646464;">Настройка канала</div>
<div class="t" style="left:71.80px;top:719.83px;font-size:15.5px;line-height:15.5px;color:#646464;letter-spacing:-0.135px;-webkit-text-stroke:0.2px #646464;">Фонотека</div>
<div class="t" style="left:71.80px;top:767.33px;font-size:15.5px;line-height:15.5px;color:#808080;letter-spacing:-0.394px;">Инспектор тегов</div>
<div class="t" style="left:71.80px;top:800.83px;font-size:15.5px;line-height:15.5px;color:#646464;letter-spacing:-0.114px;-webkit-text-stroke:0.2px #646464;">Настройки</div>
<div class="t" style="left:71.80px;top:848.83px;font-size:15.5px;line-height:15.5px;color:#646464;letter-spacing:-0.102px;-webkit-text-stroke:0.2px #646464;">Отправить отзыв</div>
<div class="t" style="left:288.10px;top:90.58px;font-size:25.2px;line-height:25.2px;color:#0d0d0d;letter-spacing:0.027px;-webkit-text-stroke:0.2px #0d0d0d;">Аналитика по каналу</div>
<div class="t" style="left:290.80px;top:157.82px;font-size:15.5px;line-height:15.5px;color:#606060;letter-spacing:-0.645px;-webkit-text-stroke:0.2px #606060;">Обзор</div>
<div class="t" style="left:376.70px;top:157.82px;font-size:15.5px;line-height:15.5px;color:#606060;letter-spacing:-0.055px;-webkit-text-stroke:0.2px #606060;">Просмотры</div>
<div class="t" style="left:499.30px;top:157.82px;font-size:15.5px;line-height:15.5px;color:#606060;letter-spacing:-0.066px;-webkit-text-stroke:0.2px #606060;">Взаимодействие</div>
<div class="t" style="left:659.00px;top:157.82px;font-size:15.5px;line-height:15.5px;color:#606060;letter-spacing:-0.241px;-webkit-text-stroke:0.2px #606060;">Аудитория</div>
<div class="t" style="left:776.00px;top:157.82px;font-size:15.5px;line-height:15.5px;color:#065fd4;letter-spacing:-0.008px;-webkit-text-stroke:0.2px #065fd4;">Доход</div>
<div class="t" style="left:1336.30px;top:93.84px;font-size:14.3px;line-height:14.3px;color:#065fd4;letter-spacing:-0.493px;-webkit-text-stroke:0.2px #065fd4;">РАСШИРЕННЫЙ РЕЖИМ</div>
<div class="t" style="left:1282.40px;top:135.83px;font-size:13.5px;line-height:13.5px;color:#909090;letter-spacing:-0.527px;">1 мар. 2014 г. – 20 февр. 2021 г.</div>
<div class="t" style="left:1282.40px;top:154.66px;font-size:15.7px;line-height:15.7px;color:#2a2a2a;letter-spacing:-0.484px;">Все время</div>
<div class="t" style="left:424.00px;top:237.92px;font-size:12.8px;line-height:12.8px;color:#606060;letter-spacing:-0.134px;-webkit-text-stroke:0.2px #606060;">Расчетный доход</div>
<div class="t" style="left:426.90px;top:259.78px;font-size:23.2px;line-height:23.2px;color:#0d0d0d;letter-spacing:-0.440px;">55 507,99 $</div>
<div class="t" style="left:799.20px;top:238.12px;font-size:12.8px;line-height:12.8px;color:#606060;letter-spacing:-0.093px;-webkit-text-stroke:0.2px #606060;">Доход на тысячу просмотров</div>
<div class="t" style="left:865.60px;top:259.78px;font-size:23.2px;line-height:23.2px;color:#0d0d0d;letter-spacing:-0.734px;">0,26 $</div>
<div class="t" style="left:1158.00px;top:238.12px;font-size:12.8px;line-height:12.8px;color:#606060;letter-spacing:-0.072px;-webkit-text-stroke:0.2px #606060;">Цена за тысячу показов по воспроизведениям</div>
<div class="t" style="left:1276.00px;top:259.78px;font-size:23.2px;line-height:23.2px;color:#0d0d0d;letter-spacing:-0.694px;">1,57 $</div>
<div class="t" style="left:1421.30px;top:377.13px;font-size:12.2px;line-height:12.2px;color:#959595;letter-spacing:-0.393px;">225,00 $</div>
<div class="t" style="left:1421.30px;top:415.13px;font-size:12.2px;line-height:12.2px;color:#959595;letter-spacing:-0.393px;">150,00 $</div>
<div class="t" style="left:1421.30px;top:453.13px;font-size:12.2px;line-height:12.2px;color:#959595;letter-spacing:-0.529px;">75,00 $</div>
<div class="t" style="left:1421.30px;top:491.13px;font-size:12.2px;line-height:12.2px;color:#959595;letter-spacing:-0.778px;">0,00 $</div>
<div class="t" style="left:305.80px;top:538.38px;font-size:12.5px;line-height:12.5px;color:#909090;letter-spacing:-0.266px;">1 мар. 2014 г.</div>
<div class="t" style="left:447.80px;top:538.38px;font-size:12.5px;line-height:12.5px;color:#909090;letter-spacing:-0.257px;">30 апр. 2015 г.</div>
<div class="t" style="left:628.35px;top:538.38px;font-size:12.5px;line-height:12.5px;color:#909090;letter-spacing:-0.191px;">27 июн. 2016 г.</div>
<div class="t" style="left:813.20px;top:538.38px;font-size:12.5px;line-height:12.5px;color:#909090;letter-spacing:-0.054px;">26 авг. 2017 г.</div>
<div class="t" style="left:996.00px;top:538.38px;font-size:12.5px;line-height:12.5px;color:#909090;letter-spacing:-0.001px;">25 окт. 2018 г.</div>
<div class="t" style="left:1178.00px;top:538.38px;font-size:12.5px;line-height:12.5px;color:#909090;letter-spacing:-0.202px;">23 дек. 2019 г.</div>
<div class="t" style="left:1320.00px;top:538.38px;font-size:12.5px;line-height:12.5px;color:#909090;letter-spacing:-0.410px;">20 февр. 202...</div>
<div class="t" style="left:305.70px;top:580.14px;font-size:14.3px;line-height:14.3px;color:#065fd4;letter-spacing:-0.811px;-webkit-text-stroke:0.2px #065fd4;">ПОДРОБНЕЕ</div>
<div class="t" style="left:306.00px;top:667.99px;font-size:18.6px;line-height:18.6px;color:#0d0d0d;letter-spacing:-0.070px;-webkit-text-stroke:0.2px #0d0d0d;">Расчетный доход с разбивкой по месяцам</div>
<div class="t" style="left:305.30px;top:694.12px;font-size:12.8px;line-height:12.8px;color:#909090;letter-spacing:0.155px;">Расчетный доход · Последние 6 месяцев</div>
<div class="t" style="left:305.20px;top:742.30px;font-size:13.3px;line-height:13.3px;color:#333333;letter-spacing:-0.368px;">Сентябрь</div>
<div class="t" style="left:801.50px;top:741.83px;font-size:12.9px;line-height:12.9px;color:#333333;letter-spacing:-0.170px;">757,21 $</div>
<div class="t" style="left:305.20px;top:782.30px;font-size:13.3px;line-height:13.3px;color:#333333;letter-spacing:-0.158px;">Октябрь</div>
<div class="t" style="left:801.50px;top:781.83px;font-size:12.9px;line-height:12.9px;color:#333333;letter-spacing:-0.170px;">878,97 $</div>
<div class="t" style="left:305.20px;top:822.30px;font-size:13.3px;line-height:13.3px;color:#333333;letter-spacing:-0.228px;">Ноябрь</div>
<div class="t" style="left:791.50px;top:821.83px;font-size:12.9px;line-height:12.9px;color:#333333;letter-spacing:-0.215px;">1 482,64 $</div>
<div class="t" style="left:305.20px;top:862.30px;font-size:13.3px;line-height:13.3px;color:#333333;letter-spacing:0.026px;">Декабрь</div>
<div class="t" style="left:791.50px;top:861.83px;font-size:12.9px;line-height:12.9px;color:#333333;letter-spacing:-0.215px;">1 182,29 $</div>
<div class="t" style="left:933.00px;top:667.99px;font-size:18.6px;line-height:18.6px;color:#0d0d0d;letter-spacing:-0.092px;-webkit-text-stroke:0.2px #0d0d0d;">Самые прибыльные видео</div>
<div class="t" style="left:933.00px;top:694.12px;font-size:12.8px;line-height:12.8px;color:#909090;letter-spacing:0.099px;">Расчетный доход · Все время</div>
<div class="t" style="left:1001.70px;top:742.08px;font-size:13.2px;line-height:13.2px;color:#333333;letter-spacing:-0.495px;">ДУШЕРАЗДИРАЮЩАЯ ИСТОРИЯ МАГО...</div>
<div class="t" style="left:1419.00px;top:742.33px;font-size:12.9px;line-height:12.9px;color:#333333;letter-spacing:-0.149px;">4 820,87 $</div>
<div class="t" style="left:1001.70px;top:782.08px;font-size:13.2px;line-height:13.2px;color:#333333;letter-spacing:-0.377px;">НИКОГДА НЕ ДЕЛАЙ ЭТИХ ОШИБОК!</div>
<div class="t" style="left:1419.00px;top:782.33px;font-size:12.9px;line-height:12.9px;color:#333333;letter-spacing:-0.149px;">1 602,50 $</div>
<div class="t" style="left:1001.70px;top:822.08px;font-size:13.2px;line-height:13.2px;color:#333333;letter-spacing:-0.390px;">40 ДНЕЙ ОН КОПАЛ ЭТУ ЯМУ! Все дум...</div>
<div class="t" style="left:1419.00px;top:822.33px;font-size:12.9px;line-height:12.9px;color:#333333;letter-spacing:-0.149px;">1 366,23 $</div>
<div class="t" style="left:1001.70px;top:862.08px;font-size:13.2px;line-height:13.2px;color:#333333;letter-spacing:-0.050px;">Не каждая жена сделает такое ! Как ж...</div>
<div class="t" style="left:1419.00px;top:862.33px;font-size:12.9px;line-height:12.9px;color:#333333;letter-spacing:-0.149px;">1 283,54 $</div>
<!-- taskbar -->
<div class="box" style="left:0;top:889px;width:1555px;height:6px;background:#1b1b1b;z-index:10"></div>
<div class="box" style="left:100px;top:889px;width:160px;height:6px;background:linear-gradient(90deg,#3c4046,#4d565e 50%,#4a4f58);z-index:11"></div>
</body></html>
